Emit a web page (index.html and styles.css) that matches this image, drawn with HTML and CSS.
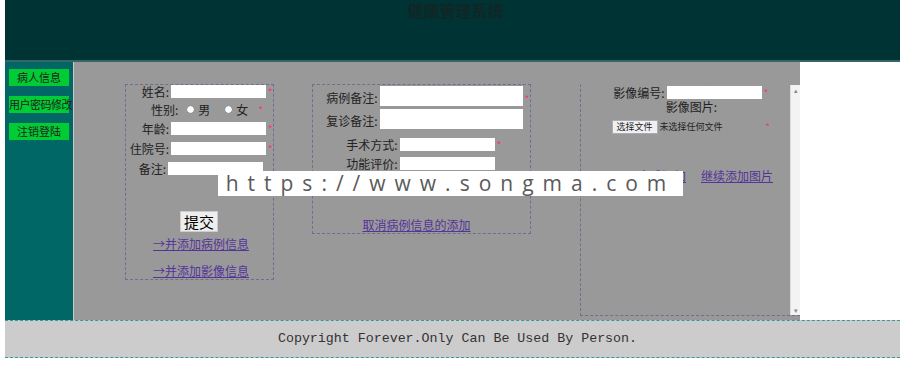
FILE: index.html
```html
<!DOCTYPE html>
<html lang="zh-CN">
<head>
<meta charset="UTF-8">
<title>健康管理系统</title>
<link rel="stylesheet" href="styles.css">
</head>
<body>
<div class="header">
    <h1>健康管理系统</h1>
</div>
<div class="middle">
    <div class="sidebar">
        <a class="side-btn" href="#">病人信息</a>
        <a class="side-btn" href="#">用户密码修改</a>
        <a class="side-btn" href="#">注销登陆</a>
    </div>
    <div class="main">
        <form class="box box-patient">
            <div class="row"><label>姓名:</label><input type="text" class="field"><span class="req">*</span></div>
            <div class="row row-sex"><label>性别:</label>
                <input type="radio" name="sex"><span class="opt">男</span>
                <input type="radio" name="sex"><span class="opt">女</span>
                <span class="req">*</span></div>
            <div class="row"><label>年龄:</label><input type="text" class="field"><span class="req">*</span></div>
            <div class="row"><label>住院号:</label><input type="text" class="field"><span class="req">*</span></div>
            <div class="row row-note"><label>备注:</label><input type="text" class="field"><span class="req blank">*</span></div>
            <button type="submit" class="submit">提交</button>
            <a class="link" href="#">→并添加病例信息</a>
            <a class="link" href="#">→并添加影像信息</a>
        </form>
        <div class="box box-case">
            <div class="row row-area"><label>病例备注:</label><textarea class="area"></textarea><span class="req">*</span></div>
            <div class="row row-area"><label>复诊备注:</label><textarea class="area"></textarea><span class="req blank">*</span></div>
            <div class="row row-op"><label>手术方式:</label><input type="text" class="field"><span class="req">*</span></div>
            <div class="row row-eval"><label>功能评价:</label><input type="text" class="field"><span class="req blank">*</span></div>
            <a class="link link-cancel" href="#">取消病例信息的添加</a>
        </div>
        <div class="box box-image">
            <div class="image-inner">
                <div class="row"><label>影像编号:</label><input type="text" class="field"><span class="req">*</span></div>
                <div class="caption">影像图片:</div>
                <div class="file-row"><span class="file-btn">选择文件</span><span class="file-name">未选择任何文件</span><span class="req">*</span></div>
                <div class="image-links">
                    <a class="link" href="#">完成添加</a>
                    <a class="link" href="#">继续添加图片</a>
                </div>
            </div>
            <div class="scrollbar"><span>▴</span><span>▾</span></div>
        </div>
    </div>
</div>
<div class="footer">Copyright Forever.Only Can Be Used By Person.</div>
<div class="watermark">https://www.songma.com</div>
</body>
</html>
```

FILE: styles.css
```css
/* Basic layout */
body {
    margin: 0 0 0 5px;
    font-family: "Noto Sans CJK SC", sans-serif;
    font-size: 12px;
    color: #222;
    background-color: #fff;
}
.header {
    height: 60px;
    background-color: #003333;
}
.header h1 {
    margin: 0;
    padding-top: 1px;
    padding-left: 6px;
    font-size: 16px;
    font-weight: bold;
    line-height: 18px;
    color: #112626;
    text-align: center;
}
.middle {
    display: flex;
    height: 258px;
    border-top: 2px solid #336666;
}
.sidebar {
    width: 68px;
    background-color: #006666;
    display: flex;
    flex-direction: column;
    align-items: center;
    gap: 10px;
    padding-top: 7px;
}
.side-btn {
    display: block;
    width: 60px;
    height: 17px;
    line-height: 17px;
    background-color: #00cc33;
    color: #222;
    text-align: center;
    text-decoration: none;
    white-space: nowrap;
    font-size: 11px;
}
.side-btn:nth-child(2) {
    letter-spacing: -0.5px;
}
.main {
    width: 727px;
    background-color: #999999;
    border-left: 1px solid #cccccc;
    display: flex;
    align-items: flex-start;
    padding-top: 22px;
    box-sizing: border-box;
}
.box {
    border: 1px dashed #6e6e90;
    box-sizing: border-box;
    display: flex;
    flex-direction: column;
    align-items: center;
}
.box-patient {
    margin: 0 0 0 51px;
    width: 149px;
    height: 196px;
    align-items: flex-start;
}
.box-case {
    margin-left: 38px;
    width: 219px;
    height: 150px;
    padding-left: 14px;
}
.box-image {
    margin-left: 49px;
    width: 221px;
    height: 232px;
    border-right: none;
    flex-direction: row;
    align-items: stretch;
    border-top-color: #999;
}
.row {
    display: flex;
    align-items: center;
    height: 20px;
    white-space: nowrap;
}
.row label {
    margin-right: 2px;
}
.box-patient .row {
    margin-left: 1px;
}
.box-patient .row label {
    width: 42px;
    text-align: right;
}
.box-patient .row:first-child {
    margin-top: -4px;
}
.box-patient .row-sex {
    height: 17px;
    margin-left: 25px;
}
.box-patient .row-sex label {
    width: auto;
}
.box-patient .row-note {
    margin-left: -2px;
}
.field {
    width: 95px;
    height: 13px;
    padding: 0;
    border: none;
    background-color: #fff;
}
.area {
    width: 143px;
    height: 20px;
    padding: 0;
    border: none;
    resize: none;
    background-color: #fff;
}
.row-area {
    align-items: flex-end;
    height: 24px;
}
.row-sex input {
    width: 9px;
    height: 9px;
    margin: 0 3px 0 6px;
}
.opt {
    margin-right: 8px;
}
.req {
    color: #ff3366;
    font-size: 10px;
    margin-left: 2px;
    width: 6px;
}
.req.blank {
    visibility: hidden;
}
.submit {
    margin: 33px 0 0 54px;
    padding: 0 3px;
    height: 21px;
    font-family: "Noto Sans CJK SC", sans-serif;
    font-size: 15px;
    line-height: 19px;
    background-color: #eee;
    border: 1px solid #ccc;
}
.link {
    color: #553399;
    text-decoration: underline;
    line-height: 16px;
}
.box-patient .link {
    margin: 4px 0 0 27px;
}
.box-patient .link + .link {
    margin-top: 11px;
}
.box-case .row:first-child {
    margin-top: -2px;
}
.box-case .row-op {
    margin-top: 6px;
}
.box-case .row-op,
.box-case .row-eval {
    margin-right: 8px;
}
.link-cancel {
    margin: 44px 24px 0 0;
}
.image-inner {
    flex: 1;
    display: flex;
    flex-direction: column;
    align-items: center;
    padding-left: 12px;
}
.image-inner .row {
    height: 14px;
}
.caption {
    line-height: 16px;
}
.file-row {
    display: flex;
    align-items: center;
    gap: 2px;
    margin-top: 4px;
    font-size: 9px;
    width: 160px;
    white-space: nowrap;
}
.file-btn {
    background-color: #f0f0f0;
    border: 1px solid #aab;
    padding: 0 4px;
    line-height: 12px;
}
.file-name {
    flex: 1;
}
.image-links {
    display: flex;
    gap: 15px;
    margin-top: 34px;
    margin-left: 28px;
}
.scrollbar {
    width: 9px;
    background-color: #f3f3f3;
    border-left: 1px solid #ddd;
    display: flex;
    flex-direction: column;
    justify-content: space-between;
    font-size: 7px;
    color: #888;
    text-align: center;
}
.footer {
    height: 36px;
    line-height: 36px;
    background-color: #cccccc;
    border-top: 1px dashed #339999;
    border-bottom: 1px dashed #339999;
    font-family: "Liberation Mono", monospace;
    font-size: 13.3px;
    color: #333;
    text-align: center;
    padding-left: 10px;
}
.watermark {
    position: absolute;
    left: 218px;
    top: 171px;
    width: 465px;
    height: 25px;
    line-height: 25px;
    background-color: #fff;
    color: #5a5a5a;
    font-family: "Open Sans", sans-serif;
    font-size: 21px;
    letter-spacing: 9px;
    text-align: center;
}
```
